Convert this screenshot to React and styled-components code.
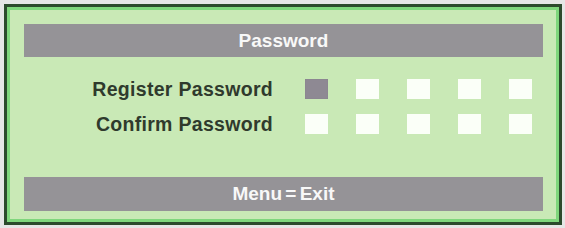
import * as React from "react";
import styled, { createGlobalStyle } from "styled-components";

const colors = {
  page: "#e6e6e6",
  frameDark: "#2c4a2c",
  frameBright: "#7fd67c",
  panel: "#c9e9b6",
  bar: "#959397",
  label: "#2f3a2d",
  slotEmpty: "#fbfff8",
  slotFilled: "#8e8993",
};

const GlobalStyle = createGlobalStyle`
  html, body {
    margin: 0;
    padding: 0;
    background: ${colors.page};
  }
  body {
    font-family: "Liberation Sans", Arial, sans-serif;
  }
`;

const Frame = styled.div`
  box-sizing: border-box;
  width: 558px;
  height: 221px;
  margin: 4px 3px 3px 4px;
  border: 3px solid ${colors.frameDark};
  box-shadow: inset 0 0 0 3px ${colors.frameBright};
  background: ${colors.panel};
  padding: 17px 16px 11px 17px;
  display: flex;
  flex-direction: column;
`;

const Bar = styled.div`
  height: ${(p) => p.$height}px;
  background: ${colors.bar};
  color: #f8f8f8;
  font-size: 19px;
  font-weight: 700;
  word-spacing: -2px;
  display: flex;
  align-items: center;
  justify-content: center;
  margin-top: ${(p) => (p.$bottom ? "auto" : "0")};
`;

const Rows = styled.div`
  display: grid;
  grid-template-columns: 249px auto;
  column-gap: 32px;
  row-gap: 15px;
  padding-top: 22px;
`;

const Label = styled.div`
  text-align: right;
  color: ${colors.label};
  font-size: 19.5px;
  font-weight: 700;
  letter-spacing: 0.3px;
  line-height: 20px;
  height: 20px;
`;

const Slots = styled.div`
  display: flex;
  gap: 28px;
`;

const Slot = styled.div`
  width: 23px;
  height: 20px;
  background: ${(p) => (p.$filled ? colors.slotFilled : colors.slotEmpty)};
  box-shadow: ${(p) => (p.$filled ? "inset 0 0 1px #7a7580" : "none")};
`;

const fields = [
  { label: "Register Password", filled: 1 },
  { label: "Confirm Password", filled: 0 },
];

export default function App() {
  return (
    <>
      <GlobalStyle />
      <Frame>
        <Bar $height={33}>Password</Bar>
        <Rows>
          {fields.map((field) => (
            <React.Fragment key={field.label}>
              <Label>{field.label}</Label>
              <Slots>
                {[0, 1, 2, 3, 4].map((i) => (
                  <Slot key={i} $filled={i < field.filled} />
                ))}
              </Slots>
            </React.Fragment>
          ))}
        </Rows>
        <Bar $height={34} $bottom>
          Menu = Exit
        </Bar>
      </Frame>
    </>
  );
}
